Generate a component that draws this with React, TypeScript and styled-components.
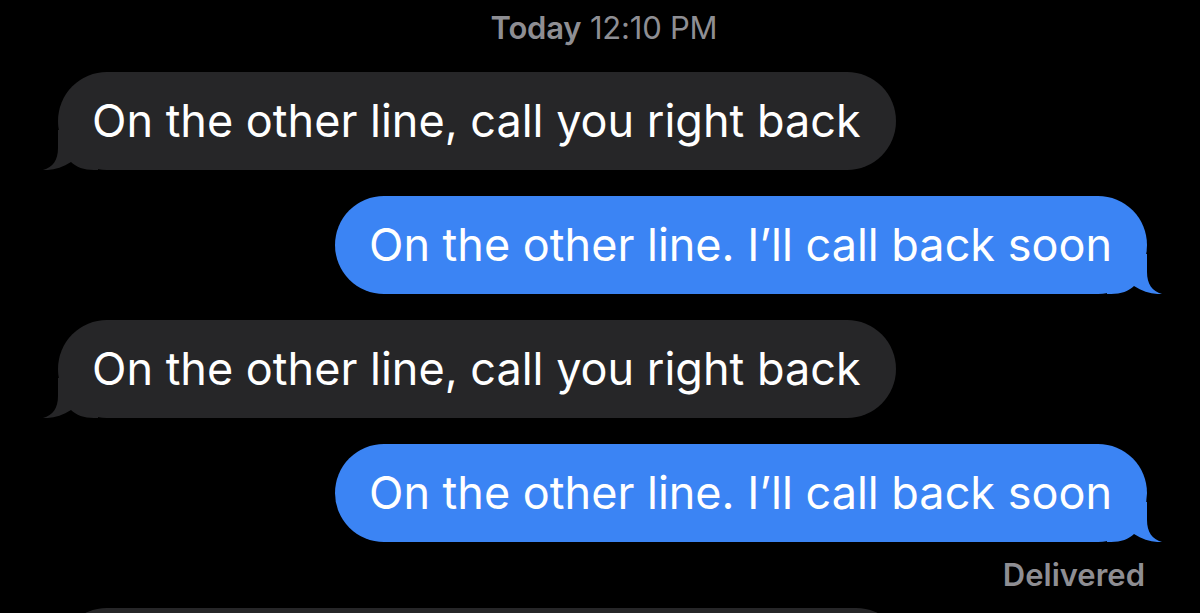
import React from "react";
import styled, { createGlobalStyle } from "styled-components";

const Global = createGlobalStyle`
  html, body { margin: 0; padding: 0; background: #000; height: 613px; overflow: hidden; }
  #root { height: 613px; }
`;

const Page = styled.div`
  height: 613px;
  background: #000;
  padding: 0 53px 0 58px;
  box-sizing: border-box;
  display: flex;
  flex-direction: column;
  font-family: Inter, "Liberation Sans", sans-serif;
  overflow: hidden;
  & > * { flex-shrink: 0; }
`;

const Stamp = styled.div`
  height: 56px;
  line-height: 56px;
  text-align: center;
  color: #8e8e93;
  font-size: 31px;
  margin-bottom: 16px;
  padding-left: 3px;
  letter-spacing: -0.2px;
  b { font-weight: 600; }
`;

const Bubble = styled.div<{ $sent?: boolean }>`
  position: relative;
  align-self: ${(p) => (p.$sent ? "flex-end" : "flex-start")};
  background: ${(p) => (p.$sent ? "#3b84f4" : "#262628")};
  color: #fff;
  font-size: 45px;
  line-height: 54px;
  letter-spacing: 0;
  padding: 22px 35px 22px 34px;
  border-radius: 49px;
  white-space: nowrap;
  & + & { margin-top: 26px; }
`;

const Placeholder = styled(Bubble)`
  width: 847px;
  height: 98px;
  box-sizing: border-box;
  padding: 0;
`;

const Tail = styled.svg<{ $sent?: boolean }>`
  position: absolute;
  bottom: 0;
  width: 56px;
  height: 40px;
  ${(p) => (p.$sent ? "right: -16px; transform: scaleX(-1);" : "left: -16px;")}
`;

const Label = styled.span`
  position: relative;
`;

const Status = styled.div`
  align-self: flex-end;
  color: #8e8e93;
  font-size: 31px;
  font-weight: 600;
  line-height: 34px;
  margin: 16px 2px 16px 0;
`;

const BubbleTail = ({ sent, color }: { sent?: boolean; color: string }) => (
  <Tail $sent={sent} viewBox="0 0 56 40">
    <path
      d="M16,0 L16,18 C16,30 11,37 1,40 C10,40.5 20,38 29,32 C34,37 42,40 52,40 L56,40 L56,0 Z"
      fill={color}
    />
  </Tail>
);

const Message = ({ sent, text }: { sent?: boolean; text: string }) => (
  <Bubble $sent={sent}>
    <BubbleTail sent={sent} color={sent ? "#3b84f4" : "#262628"} />
    <Label>{text}</Label>
  </Bubble>
);

export default function App() {
  return (
    <>
      <Global />
      <Page>
        <Stamp>
          <b>Today</b> 12:10 PM
        </Stamp>
        <Message text="On the other line, call you right back" />
        <Message sent text="On the other line. I’ll call back soon" />
        <Message text="On the other line, call you right back" />
        <Message sent text="On the other line. I’ll call back soon" />
        <Status>Delivered</Status>
        <Placeholder aria-hidden="true">
          <BubbleTail color="#262628" />
        </Placeholder>
      </Page>
    </>
  );
}
